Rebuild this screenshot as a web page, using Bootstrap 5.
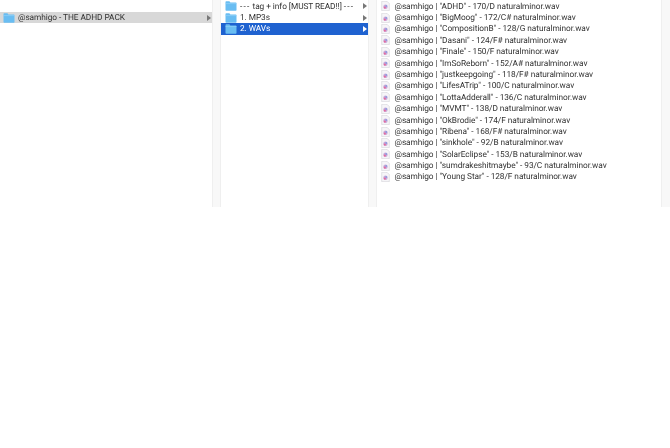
<!DOCTYPE html>
<html><head><meta charset="utf-8">
<link href="https://cdn.jsdelivr.net/npm/bootstrap@5.3.0/dist/css/bootstrap.min.css" rel="stylesheet">
<style>
html,body{background:#fff;margin:0;overflow:hidden}
.browser{height:207px;font-family:Roboto,"Liberation Sans",Arial,sans-serif;font-size:8.3px;letter-spacing:-.06px;color:#333;filter:blur(.4px);text-rendering:geometricPrecision;font-variant-ligatures:none}
.pane{background:#fff;overflow:hidden;padding-top:.6px}
.pane1{width:212px}.pane2{width:147px}.pane3{width:284px}
.gut{width:9px;background:#f8f8f8;border-left:1px solid #efefef;border-right:1px solid #efefef}
.gut3{width:9px;background:#f8f8f8;border-left:1px solid #efefef}
.rw{height:11.4px;line-height:11.4px;white-space:nowrap}
.rw span{padding-top:1px;line-height:10.4px}
.rw-sel{background:#d8d8d8}
.rw-act{background:#1f62d0;color:#fff}
.ic{flex:none}
.ar{width:0;height:0;border-left:4.5px solid #777;border-top:3px solid transparent;border-bottom:3px solid transparent;flex:none;margin-right:1px}
.rw-act .ar{border-left-color:#fff}
.p1{padding-left:3px}.p2{padding-left:4px}.p3{padding-left:4px}
.folder{margin-right:3px}
.file{margin-right:4.500px}
.dash{letter-spacing:1.2px}
</style></head><body>
<svg width="0" height="0" class="position-absolute"><defs>
<symbol id="fo" viewBox="0 0 12 10"><path d="M.5 2V1q0-.7.7-.7h3.2L5.400 1.500h5.400q.7 0 .7.700V9q0 .7-.7.7H1.200q-.7 0-.7-.7z" fill="#69bdf2"/><path d="M.5 2.600h11" stroke="#9ad5f8" stroke-width=".6"/></symbol>
<symbol id="fi" viewBox="0 0 9 10"><path d="M.7.300h5.300l2.300 2.300v7.100H.7z" fill="#f6f5f8" stroke="#c9c9cf" stroke-width=".5"/><circle cx="4.500" cy="5.700" r="2.200" fill="#c9a9d8"/><circle cx="3.800" cy="6.600" r="1.100" fill="#e46a9e"/><circle cx="5.200" cy="4.900" r="1" fill="#8f9be0"/></symbol>
</defs></svg>
<div class="browser d-flex">
<div class="pane pane1">
<div class="rw" aria-hidden="true"></div>
<div class="rw rw-sel d-flex align-items-center p1"><svg class="ic folder" width="12" height="10"><use href="#fo"/></svg><span class="flex-grow-1">@samhigo - THE ADHD PACK</span><i class="ar"></i></div>
</div>
<div class="gut"></div>
<div class="pane pane2">
<div class="rw d-flex align-items-center p2"><svg class="ic folder" width="12" height="10"><use href="#fo"/></svg><span class="flex-grow-1"><b class="fw-normal dash">---</b> tag + info [MUST READ!!] <b class="fw-normal dash">---</b></span><i class="ar"></i></div>
<div class="rw d-flex align-items-center p2"><svg class="ic folder" width="12" height="10"><use href="#fo"/></svg><span class="flex-grow-1">1. MP3s</span><i class="ar"></i></div>
<div class="rw rw-act d-flex align-items-center p2"><svg class="ic folder" width="12" height="10"><use href="#fo"/></svg><span class="flex-grow-1">2. WAVs</span><i class="ar"></i></div>
</div>
<div class="gut"></div>
<div class="pane pane3" id="files"></div>
<div class="gut3"></div>
</div>
<script>
var names=['"ADHD" - 170/D','"BigMoog" - 172/C#','"CompositionB" - 128/G','"Dasani" - 124/F#','"Finale" - 150/F','"ImSoReborn" - 152/A#','"justkeepgoing" - 118/F#','"LifesATrip" - 100/C','"LottaAdderall" - 136/C','"MVMT" - 138/D','"OkBrodie" - 174/F','"Ribena" - 168/F#','"sinkhole" - 92/B','"SolarEclipse" - 153/B','"sumdrakeshitmaybe" - 93/C','"Young Star" - 128/F'];
var h=document.getElementById('files');
names.forEach(function(n){var d=document.createElement('div');d.className='rw d-flex align-items-center p3';
d.innerHTML='<svg class="ic file" width="9" height="10"><use href="#fi"/></svg><span>@samhigo | '+n+' naturalminor.wav</span>';h.appendChild(d);});
</script>
</body></html>
